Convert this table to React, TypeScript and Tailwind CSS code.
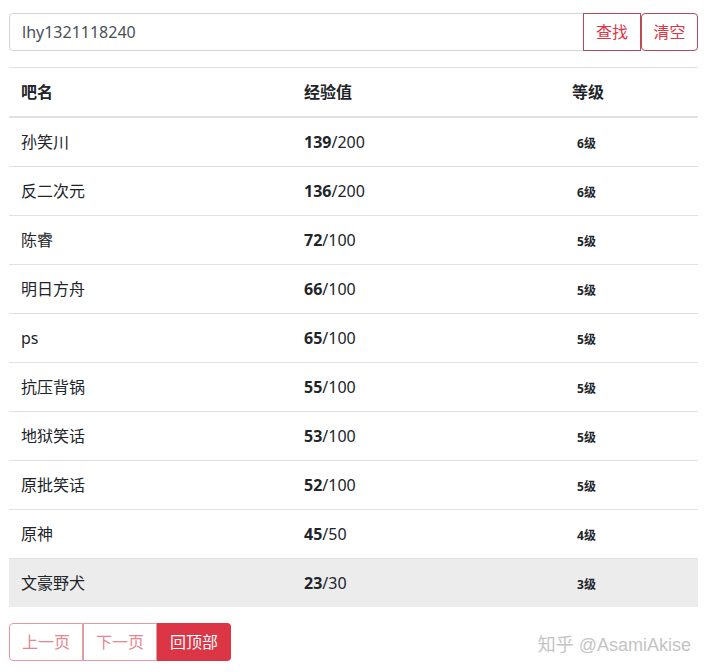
const rows = [
  { name: "孙笑川", cur: 139, max: 200, level: 6 },
  { name: "反二次元", cur: 136, max: 200, level: 6 },
  { name: "陈睿", cur: 72, max: 100, level: 5 },
  { name: "明日方舟", cur: 66, max: 100, level: 5 },
  { name: "ps", cur: 65, max: 100, level: 5 },
  { name: "抗压背锅", cur: 55, max: 100, level: 5 },
  { name: "地狱笑话", cur: 53, max: 100, level: 5 },
  { name: "原批笑话", cur: 52, max: 100, level: 5 },
  { name: "原神", cur: 45, max: 50, level: 4 },
  { name: "文豪野犬", cur: 23, max: 30, level: 3 },
];

const App = () => {
  return (
    <div className="w-[706px] h-[672px] bg-white relative overflow-hidden px-[9px] pt-[13px] text-[#212529] font-['Noto_Sans','Noto_Sans_CJK_SC',sans-serif] text-base">
      {/* Search bar */}
      <div className="flex h-[38px] mb-4 w-[689px]">
        <input
          className="flex-1 h-[38px] px-3 border border-[#ced4da] rounded-l-[4px] text-[#495057] text-base outline-none"
          defaultValue="lhy1321118240"
        />
        <button className="w-[58px] h-[38px] -ml-px border border-[#b94a56] text-[#dc3545] text-base leading-6">
          查找
        </button>
        <button className="w-[57px] h-[38px] border border-[#b94a56] rounded-[4px] text-[#dc3545] text-base leading-6">
          清空
        </button>
      </div>

      {/* Table */}
      <table className="w-[689px] table-fixed border-collapse">
        <thead>
          <tr className="border-t border-[#dee2e6] border-b-2">
            <th className="w-[283px] px-3 py-3 text-left font-bold leading-6">吧名</th>
            <th className="w-[268px] px-3 py-3 text-left font-bold leading-6">经验值</th>
            <th className="px-3 py-3 text-left font-bold leading-6">等级</th>
          </tr>
        </thead>
        <tbody>
          {rows.map((r, i) => (
            <tr
              key={r.name}
              className={
                i === rows.length - 1
                  ? "bg-[#ececec]"
                  : "border-b border-[#dee2e6]"
              }
            >
              <td className="px-3 py-3 leading-6">{r.name}</td>
              <td className="px-3 py-3 leading-6">
                <b className="font-bold">{r.cur}</b>/{r.max}
              </td>
              <td className="px-3 py-3 leading-6">
                <span className="inline-block px-[5px] text-xs font-bold leading-none align-middle">
                  {r.level}级
                </span>
              </td>
            </tr>
          ))}
        </tbody>
      </table>

      {/* Pagination */}
      <div className="flex mt-4">
        <button className="w-[74px] h-[38px] border border-[#e59aa2] rounded-l-[4px] text-[#e58690] text-base">
          上一页
        </button>
        <button className="w-[74px] h-[38px] border border-[#e59aa2] text-[#e58690] text-base">
          下一页
        </button>
        <button className="w-[74px] h-[38px] bg-[#dc3545] rounded-r-[4px] text-white text-base">
          回顶部
        </button>
      </div>

      {/* Watermark */}
      <div className="absolute right-[15px] bottom-[15px] text-[18px] leading-6 text-[#c4c4c4] font-['Liberation_Sans','Noto_Sans_CJK_SC',sans-serif]">
        知乎 @AsamiAkise
      </div>
    </div>
  );
};

export default App;
